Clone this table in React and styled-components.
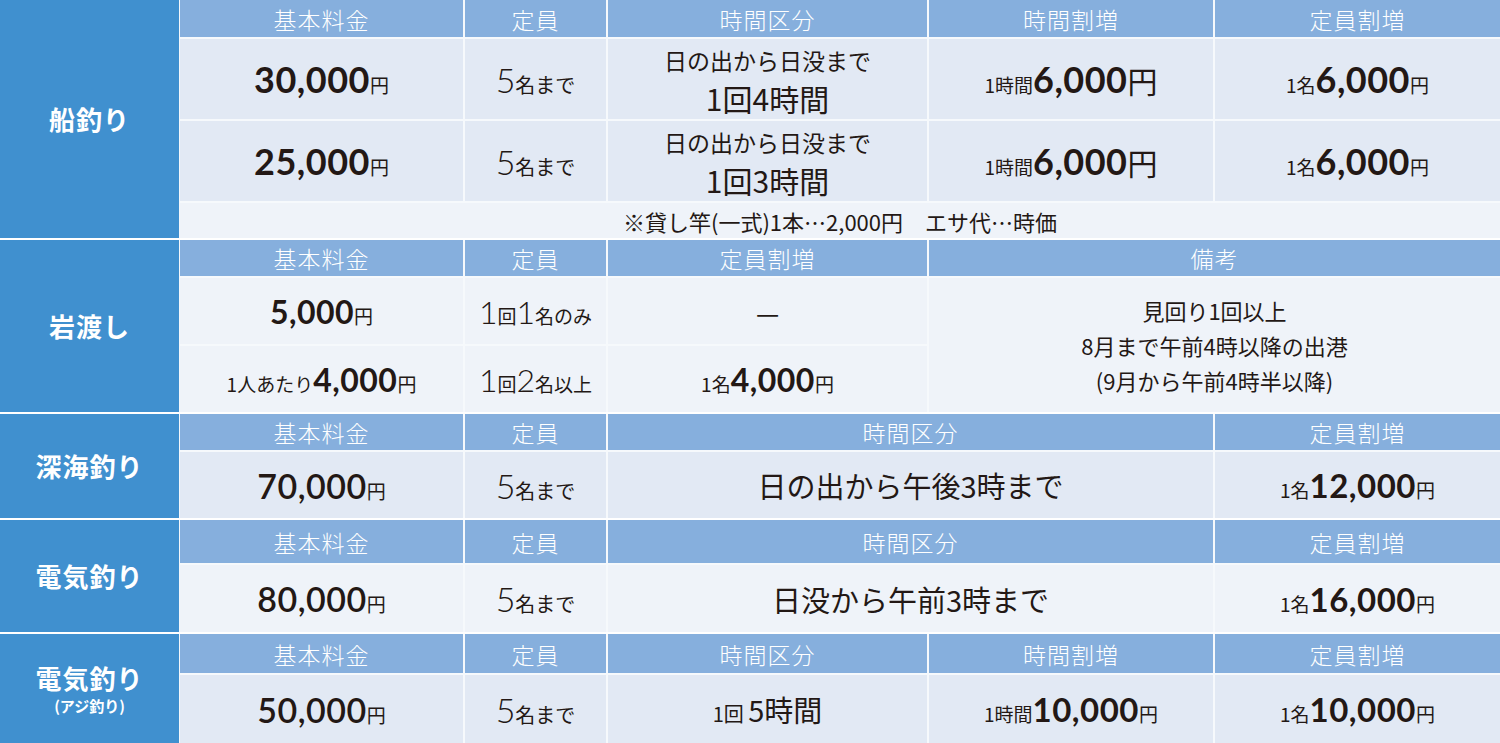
import React from "react";
import styled, { createGlobalStyle } from "styled-components";

const GlobalStyle = createGlobalStyle`
  html, body {
    margin: 0;
    padding: 0;
    background: #ffffff;
  }
  body {
    font-family: "Lato", "Noto Sans CJK JP", sans-serif;
    color: #231815;
  }
`;

const Table = styled.div`
  width: 1500px;
  height: 743px;
  display: flex;
  flex-direction: column;
  gap: 2px;
  background: #ffffff;
  overflow: hidden;
`;

const Section = styled.div`
  display: flex;
  gap: 1px;
  flex: ${(p) => (p.$grow ? 1 : "none")};
  background: #f4f7fb;
`;

const Label = styled.div`
  width: 179px;
  flex-shrink: 0;
  background: #4090cf;
  color: #ffffff;
  display: flex;
  flex-direction: column;
  align-items: center;
  justify-content: center;
  font-family: "Noto Sans CJK JP", sans-serif;
  font-weight: 700;
  font-size: 26px;
  letter-spacing: 1px;
  line-height: 1.2;
`;

const LabelSub = styled.span`
  font-size: 15px;
  font-weight: 700;
  letter-spacing: 0;
  margin-top: 4px;
`;

const Grid = styled.div`
  flex: 1;
  display: grid;
  grid-template-columns: 283px 141px 319px 284px 1fr;
  grid-template-rows: ${(p) => p.$rows};
  gap: 2px;
  background: #f6f9fc;
`;

const Head = styled.div`
  grid-column: span ${(p) => p.$span || 1};
  background: #86afdd;
  color: #ffffff;
  display: flex;
  align-items: center;
  justify-content: center;
  font-family: "Noto Sans CJK JP", sans-serif;
  font-size: 23px;
  font-weight: 300;
  letter-spacing: 1px;
`;

const Cell = styled.div`
  grid-column: span ${(p) => p.$span || 1};
  grid-row: span ${(p) => p.$rowSpan || 1};
  background: ${(p) => (p.$light ? "#eff3f9" : "#e2e9f4")};
  display: flex;
  flex-direction: column;
  align-items: center;
  justify-content: center;
  padding-top: ${(p) => p.$top || 0}px;
  text-align: center;
  font-family: "Noto Sans CJK JP", sans-serif;
  font-size: 22px;
  line-height: 1.25;
`;

const Line = styled.div`
  white-space: nowrap;
  font-size: ${(p) => p.$size || 22}px;
  line-height: ${(p) => p.$lh || "normal"};
`;

const Num = styled.span`
  font-family: "Lato", sans-serif;
  font-weight: ${(p) => p.$weight || 700};
  font-size: ${(p) => p.$size || 36}px;
  letter-spacing: 0.5px;
`;

const Small = styled.span`
  font-family: "Noto Sans CJK JP", sans-serif;
  font-size: ${(p) => p.$size || 19}px;
  font-weight: 400;
`;

const Thin = styled.span`
  font-family: "Lato", sans-serif;
  font-weight: 300;
  font-size: ${(p) => p.$size || 34}px;
`;

const Note = styled.div`
  grid-column: 1 / -1;
  background: #eff3f9;
  display: flex;
  align-items: center;
  justify-content: center;
  font-family: "Noto Sans CJK JP", sans-serif;
  font-size: 22px;
  white-space: pre;
`;

const Price = ({ value, size, weight, yen = 19 }) => (
  <Line>
    <Num $size={size} $weight={weight}>{value}</Num>
    <Small $size={yen}>円</Small>
  </Line>
);

const Capacity = ({ children }) => (
  <Line>
    <Thin>5</Thin>
    <Small $size={20}>{children}</Small>
  </Line>
);

const Extra = ({ prefix, value, yen = 19, size = 36 }) => (
  <Line>
    <Small $size={19}>{prefix}</Small>
    <Num $size={size}>{value}</Num>
    <Small $size={yen}>円</Small>
  </Line>
);

const FiveHeads = () => (
  <>
    <Head>基本料金</Head>
    <Head>定員</Head>
    <Head>時間区分</Head>
    <Head>時間割増</Head>
    <Head>定員割増</Head>
  </>
);

const FourHeads = () => (
  <>
    <Head>基本料金</Head>
    <Head>定員</Head>
    <Head $span={2}>時間区分</Head>
    <Head>定員割増</Head>
  </>
);

export default function App() {
  return (
    <>
      <GlobalStyle />
      <Table>
        <Section>
          <Label>船釣り</Label>
          <Grid $rows="37px 80px 80px 35px">
            <FiveHeads />
            {[
              ["30,000", "1回4時間"],
              ["25,000", "1回3時間"],
            ].map(([price, span]) => (
              <React.Fragment key={price}>
                <Cell>
                  <Price value={price} />
                </Cell>
                <Cell>
                  <Capacity>名まで</Capacity>
                </Cell>
                <Cell $top={4}>
                  <Line $size={23} $lh="34px">日の出から日没まで</Line>
                  <Line $size={30} $lh="43px">{span}</Line>
                </Cell>
                <Cell>
                  <Extra prefix="1時間" value="6,000" yen={30} />
                </Cell>
                <Cell>
                  <Extra prefix="1名" value="6,000" />
                </Cell>
              </React.Fragment>
            ))}
            <Note>{"※貸し竿(一式)1本…2,000円　エサ代…時価"}</Note>
          </Grid>
        </Section>

        <Section>
          <Label>岩渡し</Label>
          <Grid $rows="36px 66px 66px">
            <Head>基本料金</Head>
            <Head>定員</Head>
            <Head>定員割増</Head>
            <Head $span={2}>備考</Head>
            <Cell $light>
              <Price value="5,000" size={32} />
            </Cell>
            <Cell $light>
              <Line>
                <Thin $size={32}>1</Thin>
                <Small $size={19}>回</Small>
                <Thin $size={32}>1</Thin>
                <Small $size={19}>名のみ</Small>
              </Line>
            </Cell>
            <Cell $light>
              <Line $size={26}>—</Line>
            </Cell>
            <Cell $light $span={2} $rowSpan={2}>
              <Line $size={22} $lh="35px">見回り1回以上</Line>
              <Line $size={22} $lh="35px">8月まで午前4時以降の出港</Line>
              <Line $size={22} $lh="35px">(9月から午前4時半以降)</Line>
            </Cell>
            <Cell $light>
              <Extra prefix="1人あたり" value="4,000" size={32} />
            </Cell>
            <Cell $light>
              <Line>
                <Thin $size={32}>1</Thin>
                <Small $size={19}>回</Small>
                <Thin $size={32}>2</Thin>
                <Small $size={19}>名以上</Small>
              </Line>
            </Cell>
            <Cell $light>
              <Extra prefix="1名" value="4,000" size={32} />
            </Cell>
          </Grid>
        </Section>

        <Section>
          <Label>深海釣り</Label>
          <Grid $rows="36px 66px">
            <FourHeads />
            <Cell>
              <Price value="70,000" size={34} weight={600} />
            </Cell>
            <Cell>
              <Capacity>名まで</Capacity>
            </Cell>
            <Cell $span={2}>
              <Line $size={29}>日の出から午後3時まで</Line>
            </Cell>
            <Cell>
              <Extra prefix="1名" value="12,000" size={33} />
            </Cell>
          </Grid>
        </Section>

        <Section>
          <Label>電気釣り</Label>
          <Grid $rows="43px 67px">
            <FourHeads />
            <Cell $light>
              <Price value="80,000" size={34} weight={600} />
            </Cell>
            <Cell $light>
              <Capacity>名まで</Capacity>
            </Cell>
            <Cell $light $span={2}>
              <Line $size={29}>日没から午前3時まで</Line>
            </Cell>
            <Cell $light>
              <Extra prefix="1名" value="16,000" size={33} />
            </Cell>
          </Grid>
        </Section>

        <Section $grow>
          <Label>
            電気釣り
            <LabelSub>(アジ釣り)</LabelSub>
          </Label>
          <Grid $rows="39px 1fr">
            <FiveHeads />
            <Cell>
              <Price value="50,000" size={34} weight={600} />
            </Cell>
            <Cell>
              <Capacity>名まで</Capacity>
            </Cell>
            <Cell>
              <Line>
                <Small $size={20}>1回 </Small>
                <Small $size={29}>5時間</Small>
              </Line>
            </Cell>
            <Cell>
              <Extra prefix="1時間" value="10,000" size={33} />
            </Cell>
            <Cell>
              <Extra prefix="1名" value="10,000" size={33} />
            </Cell>
          </Grid>
        </Section>
      </Table>
    </>
  );
}
